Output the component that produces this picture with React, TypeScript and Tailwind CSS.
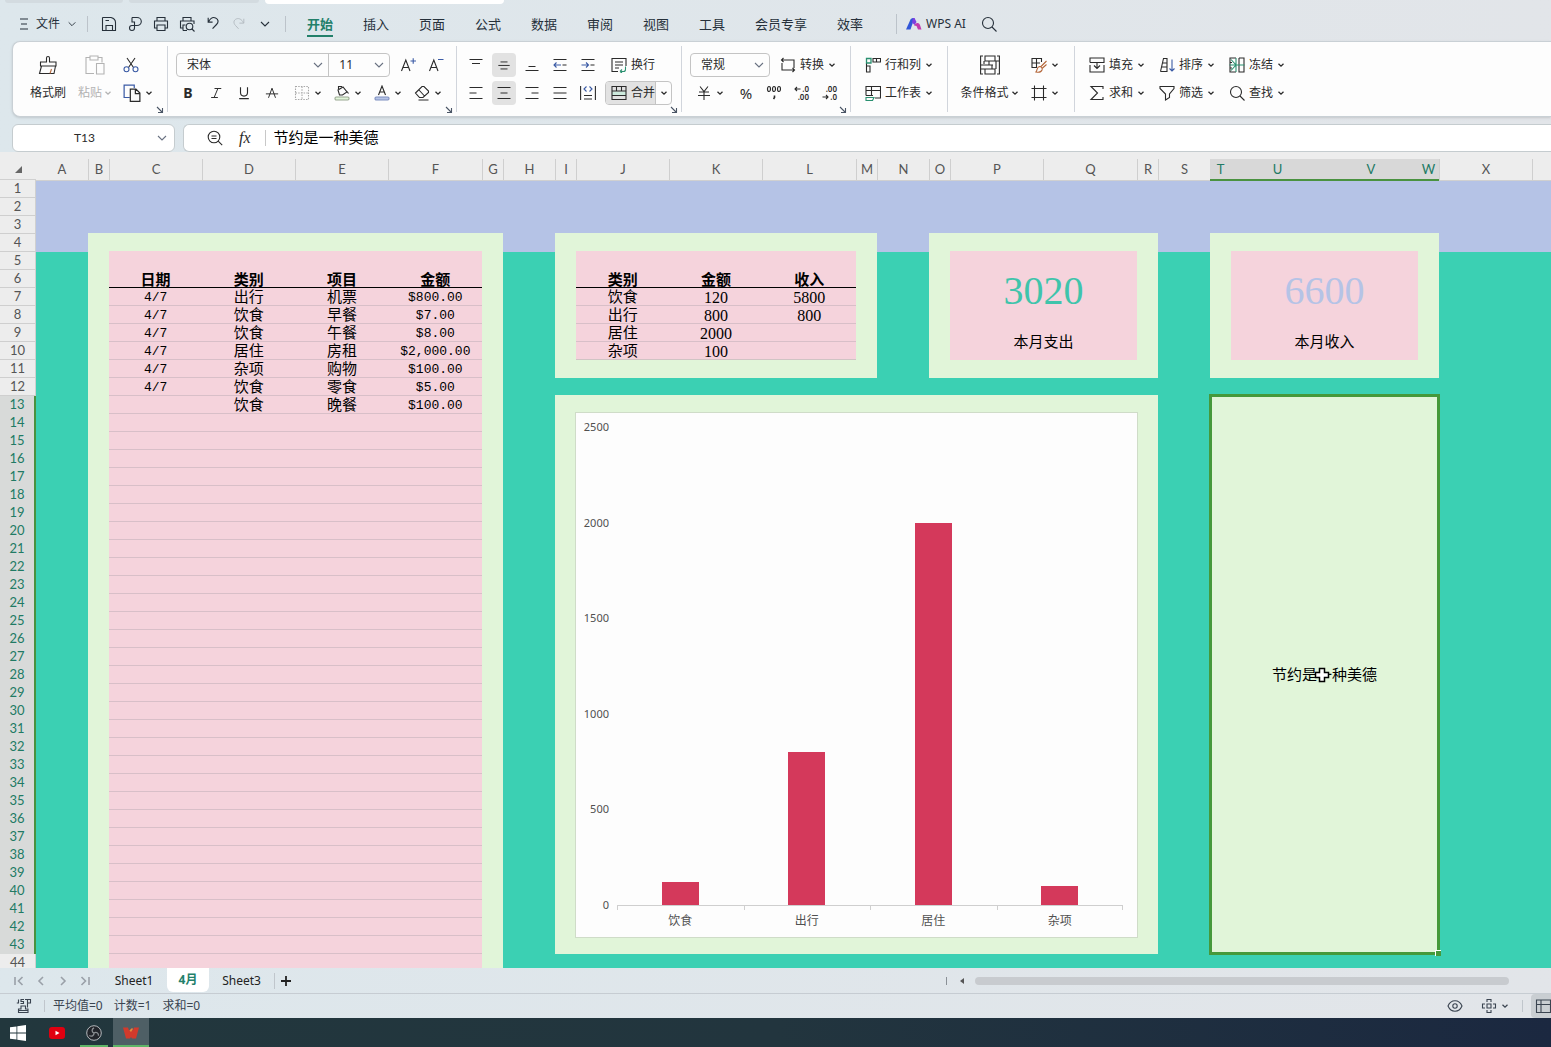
import type { ReactNode } from "react";
import clsx from "clsx";

const CJK = "font-['Noto_Sans','Noto_Sans_CJK_SC',sans-serif]";
const MONO = "font-['Liberation_Mono','Noto_Sans_CJK_SC',monospace] text-[13px]";
const SERIF = "font-['Liberation_Serif','Noto_Sans_CJK_SC',serif] text-[16px]";

// Column widths A..X, the last track takes what is left of the window
const GRID_COLS =
  "grid-cols-[52px_21px_93px_93px_93px_94px_21px_52px_21px_93px_93px_94px_21px_52px_21px_93px_94px_21px_52px_21px_93px_94px_21px_93px_1fr]";

const COLUMNS = "ABCDEFGHIJKLMNOPQRSTUVWX".split("");
const SELECTED_COLUMNS = ["T", "U", "V", "W"];
const ROWS = Array.from({ length: 44 }, (_, i) => i + 1);

const MENU_TABS = ["开始", "插入", "页面", "公式", "数据", "审阅", "视图", "工具", "会员专享", "效率"];

const EXPENSES = [
  ["4/7", "出行", "机票", "$800.00"],
  ["4/7", "饮食", "早餐", "$7.00"],
  ["4/7", "饮食", "午餐", "$8.00"],
  ["4/7", "居住", "房租", "$2,000.00"],
  ["4/7", "杂项", "购物", "$100.00"],
  ["4/7", "饮食", "零食", "$5.00"],
  ["", "饮食", "晚餐", "$100.00"],
];
const EMPTY_EXPENSE_ROWS = Array.from({ length: 31 }, (_, i) => i);

const SUMMARY = [
  ["饮食", "120", "5800"],
  ["出行", "800", "800"],
  ["居住", "2000", ""],
  ["杂项", "100", ""],
];

const CHART_MAX = 2500;
const CHART_TICKS = [2500, 2000, 1500, 1000, 500, 0];
const CHART_BARS = [
  { label: "饮食", value: 120 },
  { label: "出行", value: 800 },
  { label: "居住", value: 2000 },
  { label: "杂项", value: 100 },
];

/* ---------- icons ---------- */

function Icon({ children, className = "size-4", box = 16 }: { children: ReactNode; className?: string; box?: number }) {
  return (
    <svg
      viewBox={`0 0 ${box} ${box}`}
      className={clsx("shrink-0", className)}
      fill="none"
      stroke="currentColor"
      strokeWidth="1.1"
      aria-hidden="true"
    >
      {children}
    </svg>
  );
}

function Caret() {
  return (
    <Icon className="size-2" box={8}>
      <path d="M1.5 2.8 4 5.2l2.500-2.400" strokeWidth="1.3" />
    </Icon>
  );
}

function Chevron({ className = "size-3" }: { className?: string }) {
  return (
    <Icon className={className} box={12}>
      <path d="m2 4 4 4 4-4" />
    </Icon>
  );
}

const icons = {
  menu: <path d="M4 3h8M5 8h6M4 13h8" />,
  save: <path d="M1.500 1.500h8.500c3 .8 4.500 2.500 4.500 5V14.500h-13v-13M5 14.500V9.500h6.500v5M4.500 4.500H8" />,
  exportPdf: (
    <path d="M5 1.500h5a4.300 4 0 0 1 0 8H5a2.500 2.500 0 1 0 2.500 2.500V6H5V1.500" />
  ),
  print: <path d="M4 5V1.500h8V5M4 12H1.500V5h13v7H12M4 9h8v5.500H4z" />,
  preview: (
    <>
      <path d="M4 5V1.500h8V5M3.500 12h-2V5h13.500v3M4 14.500V9h2.500M4 14.500h4" />
      <circle cx="10.500" cy="10.500" r="3.300" />
      <path d="m13 13 2.500 2.500" />
    </>
  ),
  undo: <path d="M2.500 2v5H7.500M2.800 6.800C5 2.500 8 1 11 2.200c3.500 1.500 3.500 5 1 7.500L7.500 14.500" strokeWidth="1.300" />,
  redo: <path d="M13.500 2v5H8.500M13.200 6.800C11 2.500 8 1 5 2.200c-3.500 1.500-3.500 5-1 7.500L7.500 13.500" />,
  cut: (
    <>
      <path d="M4 1 10.500 10.500M12 1 5.500 10.500" />
      <g stroke="#3b5ba5">
        <circle cx="3.500" cy="12.200" r="2.500" />
        <circle cx="12.500" cy="12.200" r="2.500" />
      </g>
    </>
  ),
  copy: (
    <>
      <path d="M6 12H1V1h9v2.500" stroke="#3b5ba5" />
      <path d="M6.500 4.500h5L15 8v7.500H6.500zM11 4.500v4h4" />
    </>
  ),
  italic: <path d="M6 2h9M1.500 14h9M10.500 2l-5 12" strokeWidth="1.300" />,
  underline: <path d="M4 1.500v6a4 4 0 0 0 8 0v-6M2.500 14.500h11" strokeWidth="1.300" />,
  strike: <path d="m4 13.500 4-11 4 11M1 9h14" />,
  border: (
    <path d="M1.500 1.500h13v13h-13zM8 1.500v13M1.500 8h13" stroke="#a8a8a8" strokeDasharray="1.500 1.200" />
  ),
  fill: (
    <>
      <path d="m4 5 5-3 4 5-4.500 3H5.500zM4.500 4V1.500H8M13 6.500l1.500 2" />
      <rect x="1" y="12" width="14" height="3" rx="1.200" fill="#e1f5d9" stroke="#9aa892" />
    </>
  ),
  fontColor: (
    <>
      <path d="m4.500 10 3.500-9 3.500 9M5.700 7h4.600" />
      <rect x="1" y="12" width="14" height="3" rx="1.200" fill="#b5c3e6" stroke="#7f90c0" />
    </>
  ),
  eraser: <path d="M1.500 8 8 1.500h2L14.500 6v1.500l-5.500 5H5.500zM5 5l5.500 6M4.500 15h10" />,
  growFont: (
    <>
      <path d="m1.500 14 4.300-11 4.200 11M3 10.500h5.600" />
      <path d="M10.500 4H16M13.200 1.300v5.400" stroke="#3b5ba5" />
    </>
  ),
  shrinkFont: (
    <>
      <path d="m1.500 14 4.300-11 4.200 11M3 10.500h5.600" />
      <path d="M10 2.500h5.500" stroke="#3b5ba5" />
    </>
  ),
  alignTop: <path d="M1.500 2.500h13M4 6.500h8" />,
  alignMiddle: <path d="M4 4.500h8M1.500 8.500h13M4 12.500h8" />,
  alignBottom: <path d="M4.500 9.500h7M1.500 13.500h13" />,
  alignLeft: <path d="M1.500 2.500h13M1.500 8h7M1.500 13.500h13" />,
  alignCenter: <path d="M1.500 2.500h13M4.500 8h7M1.500 13.500h13" />,
  alignRight: <path d="M1.500 2.500h13M7.500 8h7M1.500 13.500h13" />,
  justify: <path d="M1.500 2.500h13M1.500 8h13M1.500 13.500h13" />,
  outdent: (
    <>
      <path d="M1.500 2.500h13M10.500 8h4M1.500 13.500h13" />
      <path d="M9 8H2m2.500-2.500L2 8l2.500 2.500" stroke="#3b5ba5" />
    </>
  ),
  indent: (
    <>
      <path d="M1.500 2.500h13M10.500 8h4M1.500 13.500h13" />
      <path d="M1.500 8h7M6 5.500 8.500 8 6 10.500" stroke="#3b5ba5" />
    </>
  ),
  distribute: (
    <>
      <path d="M.6 1v14M15.400 1v14M4 10.500h8M4 14h8" />
      <path d="M6.500 1.500 4 4l2.500 2.500M9.500 1.500 12 4 9.500 6.500" stroke="#3b5ba5" />
    </>
  ),
  wrap: (
    <>
      <path d="M7 14.500H1V1.500h14V9M4 5h8M4 8h8M4 11h4" />
      <path d="M14.500 9.500v3a2 2 0 0 1-2 2H9m0 0 2-2m-2 2 2 1.500" stroke="#2a9070" />
    </>
  ),
  merge: (
    <>
      <path d="M1 6.500h14v4.500H1z" fill="#cdeadd" stroke="none" />
      <path d="M1 1.500h14v13H1zM1 6h14M1 10.500h14M5.500 1.500V6M10.500 1.500V6" />
    </>
  ),
  convert: <path d="M3.500 1 1.500 3l2 2M1.500 3H14v8M12.500 15l2-2-2-2M14.500 13H2V6" />,
  yen: <path d="m4 1.500 4 5 4-5M3 7h10M2 10.500h12M8 6.500v8.500" />,
  rowsCols: (
    <>
      <path d="M1.500 9v6H5V9zM1.500 9V6M8 1.500h7.500V5H8zM11.500 1.500V5" />
      <path d="M1.500 1.500H6V6H1.500z" stroke="#2a9070" strokeWidth="1.300" />
    </>
  ),
  worksheet: (
    <>
      <path d="M1 10.500v-9h14.500V13H10M1 5.500h14.500M6.500 1.500v9M1 10.500h7" />
      <path d="M1 12.500h8L7.500 15.500H1z" stroke="#2a9070" />
    </>
  ),
  tableStyle: (
    <>
      <path d="M6 10.500H1v-9h9.500V5M1 6h8M5.500 1.500v9" />
      <path d="m15.500 4-6 6M15.500 7.500l-4.500 4M8.500 9.500c2 0 3 1.500 2.500 3.500-.5 1.500-3 2.500-6 2 1.500-1.500.5-5 3.500-5.500z" stroke="#b5683c" />
    </>
  ),
  cells: <path d="M3.500 .5v15M12.500 .5v15M.5 3.500h15M.5 12.500h15" />,
  fillDown: <path d="M1 5.500v-4.500h14v4.500h-14M1 8v7h14V8M8 5.500v6M5 8.500l3 3 3-3" />,
  sum: <path d="M14 4V1.500H2L8.500 8 2 14.500h12V12" />,
  sort: (
    <>
      <path d="M1.500 14.500 4.500 1.500H8v13H1.500M3.500 6H8M2.500 10H8" />
      <path d="M13 2.500v11.500M10.500 11.500 13 14l2.500-2.500" stroke="#3b5ba5" />
    </>
  ),
  filter: <path d="M1 1.500h14v2L10.500 9v3.500L6.500 15V9L1 3.500z" />,
  freeze: (
    <>
      <path d="M7 1H1v14h6M10 1h5v14h-5V1M1 5.500h2M1 11h2" />
      <path d="M.5 8h15M2 2.500 7 8l-5 5.500M7 1v14" stroke="#2a9070" />
    </>
  ),
  search: (
    <>
      <circle cx="7" cy="7" r="5.500" />
      <path d="m11 11 4.500 4.500" />
    </>
  ),
  zoomOut: (
    <>
      <circle cx="7" cy="7" r="5.800" />
      <path d="m11.200 11.200 4 4M4.500 6h5M4.500 8.500h5" />
    </>
  ),
  eye: (
    <>
      <path d="M1 8c1.500-3.500 4-5.200 7-5.200S13.500 4.500 15 8c-1.500 3.500-4 5.200-7 5.200S2.500 11.500 1 8z" />
      <circle cx="8" cy="8" r="2.200" />
    </>
  ),
  focus: <path d="M6 6h4v4H6zM6 4V1.500h4V4M6 12v2.500h4V12M4 6H1.500v4H4M12 6h2.500v4H12" />,
  normalView: <path d="M1.500 2h14v12.500h-14zM1.500 6.500h14M6 2v12.500" />,
  macro: <path d="M2.500 1.500V5H.8M8 1.500H5v2h2.500V5.500H4.500M9 1.500h5.500V5H11.500M11.500 1.500v8M2.500 14.500V11H5V8h4.500v3H12v3.500zM2.500 12.500h9.500" />,
};

function DecimalIcon({ top, bottom, arrow }: { top: string; bottom: string; arrow: "left" | "right" }) {
  return (
    <Icon className="size-[18px]" box={18}>
      <g fill="currentColor" stroke="none" fontSize="8" fontWeight="600" fontFamily="Noto Sans" textAnchor="end">
        <text x="16" y="8">{top}</text>
        <text x="16" y="16">{bottom}</text>
      </g>
      {arrow === "left" ? <path d="M7.500 5H2m2-2L2 5l2 2" /> : <path d="M1.500 13H7m-2-2 2 2-2 2" />}
    </Icon>
  );
}

/* ---------- ribbon ---------- */

function IconButton({
  label,
  active,
  children,
}: {
  label: string;
  active?: boolean;
  children: ReactNode;
}) {
  return (
    <button type="button" aria-label={label} className="flex h-6 w-7 shrink-0 items-center justify-center">
      <span className={clsx("flex size-6 items-center justify-center rounded", active && "bg-[#e2e2e2]")}>
        {children}
      </span>
    </button>
  );
}

function DropButton({ label, children }: { label: string; children: ReactNode }) {
  return (
    <button type="button" aria-label={label} className="flex h-6 w-10 shrink-0 items-center gap-1 pl-1">
      {children}
      <Caret />
    </button>
  );
}

function TextButton({ icon, label }: { icon: ReactNode; label: string }) {
  return (
    <button type="button" className="flex h-6 w-[70px] shrink-0 items-center gap-1 whitespace-nowrap">
      <Icon>{icon}</Icon>
      {label}
      <Caret />
    </button>
  );
}

function Launcher() {
  return (
    <button type="button" aria-label="更多设置" className="absolute right-[3px] -bottom-0.5 flex text-gray-600">
      <Icon className="size-2" box={8}>
        <path d="m1 1 5 5M6.500 2v4.500H2" />
      </Icon>
    </button>
  );
}

function Group({ className, launcher, children }: { className?: string; launcher?: boolean; children: ReactNode }) {
  return (
    <div className={clsx("relative my-1 shrink-0 pt-[7px]", className)}>
      {children}
      {launcher && <Launcher />}
    </div>
  );
}

function Picker({ label, value, className }: { label: string; value: string; className: string }) {
  return (
    <div className={clsx("relative h-6", className)}>
      <select aria-label={label} defaultValue={value} className="h-full w-full appearance-none bg-transparent pl-[10px] outline-none">
        <option>{value}</option>
      </select>
      <span className="pointer-events-none absolute top-1.5 right-1 text-gray-500">
        <Chevron />
      </span>
    </div>
  );
}

function MenuBar() {
  return (
    <nav className="flex h-[34px] items-center pl-4 text-[12px] text-[#26303a]">
      <button type="button" className="flex items-center gap-1">
        <Icon>{icons.menu}</Icon>
        文件
        <span className="pl-[3px]">
          <Chevron className="size-2.5" />
        </span>
      </button>
      <span className="ml-[10px] h-4 w-px bg-[#bcc3ca]" />
      <div className="ml-2 flex">
        {(
          [
            ["保存", icons.save],
            ["输出为PDF", icons.exportPdf],
            ["打印", icons.print],
            ["打印预览", icons.preview],
            ["撤销", icons.undo],
          ] as [string, ReactNode][]
        ).map(([label, icon]) => (
          <button key={label} type="button" aria-label={label} className="flex w-[26px] justify-center">
            <Icon className={label === "撤销" ? "size-[14px]" : "size-4"}>{icon}</Icon>
          </button>
        ))}
        <button type="button" aria-label="恢复" className="flex w-[26px] items-center justify-center text-[#b3bac1]">
          <Icon className="size-[14px]">{icons.redo}</Icon>
        </button>
        <button type="button" aria-label="自定义" className="flex w-[26px] items-center justify-center">
          <Chevron />
        </button>
      </div>
      <span className="ml-[7px] h-4 w-px bg-[#bcc3ca]" />
      <div className="ml-[6px] flex text-[13px]">
        {MENU_TABS.map((tab, i) => (
          <button
            key={tab}
            type="button"
            className={clsx(
              "flex h-7 shrink-0 justify-center whitespace-nowrap pt-1",
              tab.length > 2 ? "w-[82px]" : "w-14",
            )}
          >
            <span className={clsx("h-[23px] leading-5", i === 0 && "border-b-2 border-[#23806a] font-bold text-[#23806a]")}>
              {tab}
            </span>
          </button>
        ))}
      </div>
      <span className="ml-[18px] h-5 w-px bg-[#bcc3ca]" />
      <button type="button" className="ml-[9px] flex items-center gap-1 whitespace-nowrap">
        <svg viewBox="0 0 16 14" className="h-[14px] w-4" aria-hidden="true">
          <path d="M0 12.500 4.500 2.500Q5.200 1 7 1h1.500L4.500 12.500z" fill="#3156d8" />
          <path d="M7 1h1.500L10.500 5 8.500 8 6 5.500z" fill="#7b3fe0" />
          <path d="M8 8.500Q9 5.500 12 6q1.500.5 2 2l1.500 4.500h-3.500L10.500 9z" fill="#c13cae" />
        </svg>
        WPS AI
      </button>
      <button type="button" aria-label="搜索" className="ml-[15px]">
        <Icon>{icons.search}</Icon>
      </button>
    </nav>
  );
}

function Ribbon() {
  return (
    <section className="ml-3 flex h-[76px] overflow-hidden rounded-l-lg border border-r-0 border-[#c9d0d5] bg-[#fdfdfd] text-[12px] text-[#2b2b2b] shadow-sm">
      <Group className="w-[155px] border-r border-gray-300" launcher>
        <div className="flex pl-2">
          <button type="button" className="flex w-[54px] flex-col items-center gap-1">
            <span className="flex h-6 items-center">
              <Icon className="size-5" box={20}>
                <path d="M8.500 7V3a1.500 1.500 0 0 1 3 0v4H18v4H2.500V7zM3.500 11 1.500 18.500h14.500l1.500-7.500" />
                <path d="M12 18.500 13.500 14" stroke="#b5683c" />
              </Icon>
            </span>
            <span className="leading-6">格式刷</span>
          </button>
          <button type="button" className="flex w-10 flex-col items-center gap-1 text-[#b3b3b3]">
            <span className="flex h-6 items-center">
              <Icon className="size-5" box={20}>
                <path d="M9 18.500H1v-16h4M13 2.500h4v5M5 1h8v4H5zM11.500 8.500h7.500v10.500h-7.500z" />
              </Icon>
            </span>
            <span className="flex items-center gap-0.5 whitespace-nowrap leading-6">
              粘贴
              <Caret />
            </span>
          </button>
          <div className="flex flex-col gap-1 pl-1">
            <button type="button" aria-label="剪切" className="flex h-6 items-center pl-1">
              <Icon>{icons.cut}</Icon>
            </button>
            <DropButton label="复制">
              <Icon className="size-[18px]">{icons.copy}</Icon>
            </DropButton>
          </div>
        </div>
      </Group>

      <Group className="w-[289px] border-r border-gray-300" launcher>
        <div className="flex items-center pl-2">
          <div className="flex w-[214px] rounded border border-[#c4c4c4]">
            <Picker label="字体" value="宋体" className="-my-px w-[152px]" />
            <Picker label="字号" value="11" className="-my-px w-[61px] border-l border-[#c4c4c4]" />
          </div>
          <div className="flex pl-1">
            <IconButton label="增大字号"><Icon>{icons.growFont}</Icon></IconButton>
            <IconButton label="减小字号"><Icon>{icons.shrinkFont}</Icon></IconButton>
          </div>
        </div>
        <div className="mt-1 flex pl-1.5">
          <IconButton label="加粗"><b className="text-[14px] leading-6">B</b></IconButton>
          <IconButton label="倾斜"><Icon className="size-3">{icons.italic}</Icon></IconButton>
          <IconButton label="下划线"><Icon className="size-[14px]">{icons.underline}</Icon></IconButton>
          <IconButton label="删除线"><Icon className="size-[14px]">{icons.strike}</Icon></IconButton>
          <div className="flex pl-1">
            <DropButton label="边框"><Icon>{icons.border}</Icon></DropButton>
            <DropButton label="填充颜色"><Icon>{icons.fill}</Icon></DropButton>
            <DropButton label="字体颜色"><Icon>{icons.fontColor}</Icon></DropButton>
            <DropButton label="清除"><Icon>{icons.eraser}</Icon></DropButton>
          </div>
        </div>
      </Group>

      <Group className="w-[225px] border-r border-gray-300" launcher>
        <div className="flex pl-[5px]">
          <IconButton label="顶端对齐"><Icon>{icons.alignTop}</Icon></IconButton>
          <IconButton label="垂直居中" active><Icon className="size-[14px]">{icons.alignMiddle}</Icon></IconButton>
          <IconButton label="底端对齐"><Icon>{icons.alignBottom}</Icon></IconButton>
          <IconButton label="减少缩进"><Icon>{icons.outdent}</Icon></IconButton>
          <IconButton label="增加缩进"><Icon>{icons.indent}</Icon></IconButton>
          <button type="button" className="flex h-6 items-center gap-1 pl-[9px]">
            <Icon>{icons.wrap}</Icon>
            换行
          </button>
        </div>
        <div className="mt-1 flex pl-[5px]">
          <IconButton label="左对齐"><Icon>{icons.alignLeft}</Icon></IconButton>
          <IconButton label="水平居中" active><Icon>{icons.alignCenter}</Icon></IconButton>
          <IconButton label="右对齐"><Icon>{icons.alignRight}</Icon></IconButton>
          <IconButton label="两端对齐"><Icon>{icons.justify}</Icon></IconButton>
          <IconButton label="分散对齐"><Icon>{icons.distribute}</Icon></IconButton>
          <div className="ml-[3px] flex h-6 overflow-hidden rounded border border-[#c4c4c4]">
            <button type="button" className="flex items-center gap-1 bg-[#e2e2e2] px-[5px] pr-0">
              <Icon>{icons.merge}</Icon>
              合并
            </button>
            <button type="button" aria-label="合并选项" className="flex w-4 items-center justify-center border-l border-[#c4c4c4]">
              <Caret />
            </button>
          </div>
        </div>
      </Group>

      <Group className="w-[169px] border-r border-gray-300" launcher>
        <div className="flex items-center pl-2">
          <div className="flex w-20 rounded border border-[#c4c4c4]">
            <Picker label="数字格式" value="常规" className="-my-px w-full" />
          </div>
          <div className="pl-[10px]">
            <TextButton icon={icons.convert} label="转换" />
          </div>
        </div>
        <div className="mt-1 flex pl-[10px]">
          <DropButton label="货币"><Icon>{icons.yen}</Icon></DropButton>
          <IconButton label="百分比"><span className="text-[15px] leading-6">%</span></IconButton>
          <IconButton label="千位分隔">
            <Icon>
              <g strokeWidth="1.200">
                <ellipse cx="3" cy="4" rx="1.500" ry="2.500" />
                <ellipse cx="8" cy="4" rx="1.500" ry="2.500" />
                <ellipse cx="13" cy="4" rx="1.500" ry="2.500" />
                <path d="M8.500 10.500v2L7.500 14" strokeWidth="1.600" />
              </g>
            </Icon>
          </IconButton>
          <IconButton label="增加小数位"><DecimalIcon top=".0" bottom=".00" arrow="left" /></IconButton>
          <IconButton label="减少小数位"><DecimalIcon top=".00" bottom=".0" arrow="right" /></IconButton>
        </div>
      </Group>

      <Group className="w-[97px] border-r border-gray-300">
        <div className="flex flex-col gap-1 pl-[14px]">
          <TextButton icon={icons.rowsCols} label="行和列" />
          <TextButton icon={icons.worksheet} label="工作表" />
        </div>
      </Group>

      <Group className="w-[127px] border-r border-gray-300">
        <div className="flex pl-3">
          <button type="button" className="flex w-[59px] flex-col items-center gap-1">
            <span className="flex h-6 items-center">
              <Icon className="size-5" box={20}>
                <path d="M3 1H.6v18H3M17 1h2.400v18H17M5 1h10v5H5zM5 14h10v5H5zM9 6v4M.6 10H13M12 10v4M4 6v3M9 6h10M.6 14H5M16 6v8" />
              </Icon>
            </span>
            <span className="flex items-center gap-0.5 whitespace-nowrap leading-6">
              条件格式
              <Caret />
            </span>
          </button>
          <div className="flex flex-col gap-1 pl-2">
            <DropButton label="表格样式"><Icon>{icons.tableStyle}</Icon></DropButton>
            <DropButton label="单元格"><Icon>{icons.cells}</Icon></DropButton>
          </div>
        </div>
      </Group>

      <Group>
        <div className="grid grid-cols-3 gap-y-1 pl-[14px]">
          <TextButton icon={icons.fillDown} label="填充" />
          <TextButton icon={icons.sort} label="排序" />
          <TextButton icon={icons.freeze} label="冻结" />
          <TextButton icon={icons.sum} label="求和" />
          <TextButton icon={icons.filter} label="筛选" />
          <TextButton icon={icons.search} label="查找" />
        </div>
      </Group>
    </section>
  );
}

function FormulaBar() {
  return (
    <div className="mt-[7px] flex h-7 gap-2 pl-3 text-[#2b2b2b]">
      <div className="flex w-[163px] items-center rounded-md border border-[#c5cccf] bg-white pr-1.5">
        <input
          aria-label="名称框"
          defaultValue="T13"
          className="w-full min-w-0 bg-transparent text-center font-['Lato',sans-serif] text-[12px] outline-none"
        />
        <span className="text-gray-500">
          <Chevron />
        </span>
      </div>
      <div className="flex flex-1 items-center rounded-l-md border border-r-0 border-[#c5cccf] bg-white pl-[23px]">
        <button type="button" aria-label="浏览公式结果">
          <Icon>{icons.zoomOut}</Icon>
        </button>
        <button
          type="button"
          aria-label="插入函数"
          className="ml-4 font-['Liberation_Serif',serif] text-[16px] italic leading-6"
        >
          fx
        </button>
        <span className="ml-[14px] h-4 w-px bg-[#c8c8c8]" />
        <input
          aria-label="编辑栏"
          defaultValue="节约是一种美德"
          className="h-6 flex-1 bg-transparent pb-1 pl-2 text-[15px] text-black outline-none"
        />
      </div>
    </div>
  );
}

/* ---------- sheet ---------- */

function ColumnHeaders() {
  return (
    <div className="relative z-10 flex h-7 shrink-0 bg-[#ededed] pt-[7px] text-[#555]">
      <div className="flex w-9 shrink-0 items-center justify-center border-b border-[#d0d0d0]">
        <svg viewBox="0 0 8 8" className="size-[7px]" aria-hidden="true">
          <path d="M8 0v8H0z" fill="#666" />
        </svg>
      </div>
      <div className={clsx("grid flex-1 text-center font-['Lato',sans-serif] text-[13px] leading-5", GRID_COLS)}>
        {COLUMNS.map((name) => {
          const selected = SELECTED_COLUMNS.includes(name);
          return (
            <div
              key={name}
              className={clsx(
                selected
                  ? "border-b-2 border-[#4a9240] bg-[#d8d8d8] text-[#217a64]"
                  : "border-b border-[#d0d0d0]",
                !selected && name !== "A" && "border-l border-l-[#cfcfcf]",
              )}
            >
              {name}
            </div>
          );
        })}
        <div className="border-b border-l border-[#cfcfcf]" />
      </div>
    </div>
  );
}

function RowHeaders() {
  return (
    <div className="w-9 shrink-0 bg-[#ededed] text-center font-['Lato',sans-serif] text-[13px] leading-[17px] text-[#555]">
      {ROWS.map((n) => {
        const selected = n >= 13 && n <= 43;
        return (
          <div
            key={n}
            className={clsx(
              "h-[18px]",
              selected
                ? "border-r-2 border-r-[#4a9240] bg-[#d8dad9] text-[#217a64]"
                : "border-r border-b border-b-[#cfcfcf] border-r-[#d0d0d0]",
            )}
          >
            {n}
          </div>
        );
      })}
    </div>
  );
}

function HeadCell({ children }: { children: ReactNode }) {
  return <th className="h-9 p-0 align-bottom text-[15px] leading-[16px] font-bold">{children}</th>;
}

const cell = "h-[18px] border-t p-0";
const textCell = "leading-[17px]";
const numberCell = "pt-0.5 leading-[15px]";

function ExpenseTable() {
  return (
    <table className="w-full table-fixed border-separate border-spacing-0 bg-[#f5d3dc] text-center text-[15px] text-black">
      <thead>
        <tr>
          {["日期", "类别", "项目", "金额"].map((h) => (
            <HeadCell key={h}>{h}</HeadCell>
          ))}
        </tr>
      </thead>
      <tbody>
        {EXPENSES.map((row, i) => (
          <tr key={row.join()}>
            {row.map((text, j) => (
              <td
                key={j}
                className={clsx(
                  cell,
                  i === 0 ? "border-black" : "border-[#d8bfc8]",
                  j === 0 || j === 3 ? [numberCell, MONO] : textCell,
                )}
              >
                {text}
              </td>
            ))}
          </tr>
        ))}
        {EMPTY_EXPENSE_ROWS.map((n) => (
          <tr key={n}>
            <td colSpan={4} className={clsx(cell, "border-[#d8bfc8]")} />
          </tr>
        ))}
      </tbody>
    </table>
  );
}

function SummaryTable() {
  return (
    <table className="w-full table-fixed border-separate border-spacing-0 border-b border-[#d0c4c4] bg-[#f5d3dc] text-center text-[15px] text-black">
      <thead>
        <tr>
          {["类别", "金额", "收入"].map((h) => (
            <HeadCell key={h}>{h}</HeadCell>
          ))}
        </tr>
      </thead>
      <tbody>
        {SUMMARY.map((row, i) => (
          <tr key={row[0]}>
            {row.map((text, j) => (
              <td
                key={j}
                className={clsx(
                  cell,
                  i === 0 ? "border-black" : "border-[#d8bfc8]",
                  j > 0 ? [numberCell, SERIF] : textCell,
                )}
              >
                {text}
              </td>
            ))}
          </tr>
        ))}
      </tbody>
    </table>
  );
}

function TotalCard({ value, label, valueClass }: { value: string; label: string; valueClass: string }) {
  return (
    <div className="flex h-full flex-col items-center bg-[#f5d3dc] pt-5">
      <div className={clsx("font-['Liberation_Serif',serif] text-[40px] leading-10", valueClass)}>{value}</div>
      <div className="mt-5 text-[15px] leading-5 text-black">{label}</div>
    </div>
  );
}

function BarChart() {
  return (
    <div className="flex h-full border border-[#cfdcc8] bg-[#fdfdfd] pt-[14px] pr-[14px] pb-[5px] text-[#505050]">
      <div className="-mt-2 mb-[19px] flex w-[41px] shrink-0 flex-col justify-between pr-2 text-right font-['Noto_Sans',sans-serif] text-[11px] leading-4">
        {CHART_TICKS.map((tick) => (
          <span key={tick}>{tick}</span>
        ))}
      </div>
      <div className="flex flex-1 flex-col">
        <div className="grid flex-1 grid-cols-4 border-b border-[#cfcfcf]">
          {CHART_BARS.map((bar) => (
            <div key={bar.label} className="flex items-end justify-center">
              <div className="w-[37px] bg-[#d4395b]" style={{ height: `${(bar.value / CHART_MAX) * 100}%` }} />
            </div>
          ))}
        </div>
        <div className="grid grid-cols-4 text-center text-[12px]">
          {CHART_BARS.map((bar, i) => (
            <div key={bar.label}>
              <div className={clsx("h-1 border-l border-[#cfcfcf]", i === CHART_BARS.length - 1 && "border-r")} />
              <div className="leading-[22px]">{bar.label}</div>
            </div>
          ))}
        </div>
      </div>
    </div>
  );
}

function Sheet() {
  const card = "-mb-px bg-[#e1f5d9]";
  return (
    <main className="flex min-h-0 flex-1 flex-col overflow-hidden">
      <ColumnHeaders />
      <div className="flex min-h-0 flex-1">
        <RowHeaders />
        <div
          className={clsx("-mt-px grid flex-1 grid-rows-[repeat(44,18px)] content-start overflow-hidden bg-[#3bd0b3]", GRID_COLS)}
        >
          <div className="col-span-full row-start-1 row-end-5 -mb-px bg-[#b5c3e6]" />
          <div className={clsx(card, "col-start-2 col-end-8 row-start-4 row-end-45 px-[21px] pt-[18px]")}>
            <ExpenseTable />
          </div>
          <div className={clsx(card, "col-start-9 col-end-14 row-start-4 row-end-12 px-[21px] pt-[18px]")}>
            <SummaryTable />
          </div>
          <div className={clsx(card, "col-start-15 col-end-19 row-start-4 row-end-12 px-[21px] py-[18px]")}>
            <TotalCard value="3020" label="本月支出" valueClass="text-[#3fc4ab]" />
          </div>
          <div className={clsx(card, "col-start-20 col-end-24 row-start-4 row-end-12 px-[21px] py-[18px]")}>
            <TotalCard value="6600" label="本月收入" valueClass="text-[#b5c3e6]" />
          </div>
          <div className={clsx(card, "col-start-9 col-end-19 row-start-13 row-end-44 px-5 pt-[17px] pb-4")}>
            <BarChart />
          </div>
          <div
            className={clsx(
              card,
              "relative col-start-20 col-end-24 row-start-13 row-end-44 flex items-center justify-center text-[15px] text-black outline-[3px] -outline-offset-2 outline-[#45993b]",
            )}
          >
            节约是一种美德
            <svg viewBox="0 0 16 16" className="absolute top-[272px] left-[104px] size-4" aria-hidden="true">
              <path
                d="M5.500 1.500h5v4h4v5h-4v4h-5v-4h-4v-5h4z"
                fill="#fff"
                stroke="#000"
                strokeWidth="1.500"
              />
            </svg>
            <span className="absolute -right-0.5 -bottom-0.5 size-[6px] border-t border-l border-white bg-[#45993b]" />
          </div>
        </div>
      </div>
    </main>
  );
}

/* ---------- bottom bars ---------- */

function SheetTabs() {
  return (
    <div className="flex h-[26px] shrink-0 items-center border-b border-[#c6ccd2] text-[12px] text-[#222]">
      <div className="flex w-[101px] shrink-0 items-center gap-[10px] pl-[13px] text-[#9aa0a8]">
        {["M2 2v8M9.500 2 5.500 6l4 4", "M8 2 4 6l4 4", "m4 2 4 4-4 4", "M10 2v8M2.500 2l4 4-4 4"].map((d, i) => (
          <button key={d} type="button" aria-label={["首个", "上一个", "下一个", "末个"][i]}>
            <Icon className="size-3" box={12}>
              <path d={d} strokeWidth="1.600" />
            </Icon>
          </button>
        ))}
      </div>
      <button type="button" className="w-[66px] shrink-0">Sheet1</button>
      <button type="button" className="h-6 w-[42px] shrink-0 self-start rounded-b-md bg-white font-bold text-[#23806a]">
        4月
      </button>
      <button type="button" className="w-[65px] shrink-0">Sheet3</button>
      <span className="h-4 w-px bg-[#c0c6cc]" />
      <button type="button" aria-label="新建工作表" className="ml-[3px]">
        <Icon>
          <path d="M8 3v10M3 8h10" strokeWidth="1.800" />
        </Icon>
      </button>
      <div className="ml-auto flex w-[605px] items-center pr-[42px]">
        <span className="h-2 w-px bg-[#8a9096]" />
        <button type="button" aria-label="向左滚动" className="ml-3">
          <svg viewBox="0 0 6 6" className="size-[6px]" aria-hidden="true">
            <path d="M5 0v6L1 3z" fill="#555" />
          </svg>
        </button>
        <div className="ml-[10px] h-2 flex-1 rounded-full bg-[#c8cbcf]" />
      </div>
    </div>
  );
}

function StatusBar() {
  return (
    <div className="flex h-6 shrink-0 items-center overflow-hidden pl-4 text-[12px] text-[#3a4450]">
      <Icon>{icons.macro}</Icon>
      <span className="ml-3 h-3 w-px bg-[#c0c6cc]" />
      <div className="ml-2 flex gap-[11px]">
        <span>平均值=0</span>
        <span>计数=1</span>
        <span>求和=0</span>
      </div>
      <div className="ml-auto flex items-center">
        <button type="button" aria-label="护眼模式">
          <Icon>{icons.eye}</Icon>
        </button>
        <button type="button" aria-label="阅读模式" className="ml-[18px] flex items-center gap-1">
          <Icon>{icons.focus}</Icon>
          <Caret />
        </button>
        <span className="ml-[13px] h-3 w-px bg-[#c0c6cc]" />
        <button type="button" aria-label="普通视图" className="-mr-1 ml-2 flex h-6 w-6 items-center rounded bg-[#c9ced2] pl-1">
          <Icon>{icons.normalView}</Icon>
        </button>
      </div>
    </div>
  );
}

function Taskbar() {
  return (
    <footer className="flex h-[29px] shrink-0 bg-linear-to-r from-[#22373d] via-[#22353e] to-[#1b2840]">
      <button type="button" aria-label="开始菜单" className="flex w-9 items-center justify-center">
        <svg viewBox="0 0 16 16" className="size-4" fill="#fff" aria-hidden="true">
          <path d="M0 2.300 6.500 1.400v6.200H0zM7.300 1.300 16 0v7.600H7.300zM0 8.400h6.500v6.200L0 13.700zM7.300 8.400H16V16l-8.700-1.300z" />
        </svg>
      </button>
      <button type="button" aria-label="YouTube" className="ml-[3px] flex w-9 items-center justify-center">
        <svg viewBox="0 0 16 12" className="h-3 w-4" aria-hidden="true">
          <rect width="16" height="12" rx="3" fill="#e00010" />
          <path d="m6.500 3.700 4 2.300-4 2.300z" fill="#fff" />
        </svg>
      </button>
      <button type="button" aria-label="OBS" className="ml-[5px] flex w-7 items-center justify-center border-b-2 border-[#5fb567] pt-0.5">
        <svg viewBox="0 0 16 16" className="size-4" aria-hidden="true">
          <circle cx="8" cy="8" r="7.300" fill="#22252b" stroke="#b4b8bc" />
          <path
            d="M8 8C5.500 7 5.500 4 8 2.800M8 8c2.200-1.600 4.700 0 4.500 2.700M8 8c.2 2.700-2.500 4-4.700 2.500"
            fill="none"
            stroke="#8a8e92"
            strokeWidth="1.300"
          />
        </svg>
      </button>
      <button type="button" aria-label="WPS Office" className="ml-[5px] flex w-9 items-center justify-center border-b-2 border-[#5fb567] bg-[#4e5f65] pt-0.5">
        <svg viewBox="0 0 16 12" className="h-3 w-4" aria-hidden="true">
          <path d="M0 .5h5l1 3 2-1.500 2 1.500 1-3h5L13 11.500h-4L8 10l-1 1.500H3z" fill="#d23a2c" />
          <path d="M6.500 3.500 9 1l1 1-2 3z" fill="#e58a3c" />
        </svg>
      </button>
    </footer>
  );
}

export default function App() {
  return (
    <div className={clsx("flex h-screen flex-col overflow-hidden bg-linear-to-r from-[#dde7ec] to-[#e2e5e9]", CJK)}>
      <header className="shrink-0">
        <div className="flex h-[5px] gap-[6px] pb-px pl-[5px]">
          <div className="h-[3px] w-[118px] rounded-b-md bg-[#d3dbe0]" />
          <div className="h-[3px] w-[130px] rounded-b-md bg-[#d3dbe0]" />
          <div className="w-[239px] rounded-b-md bg-white" />
        </div>
        <div className="pt-0.5">
          <MenuBar />
        </div>
        <Ribbon />
        <FormulaBar />
      </header>
      <Sheet />
      <SheetTabs />
      <StatusBar />
      <Taskbar />
    </div>
  );
}
